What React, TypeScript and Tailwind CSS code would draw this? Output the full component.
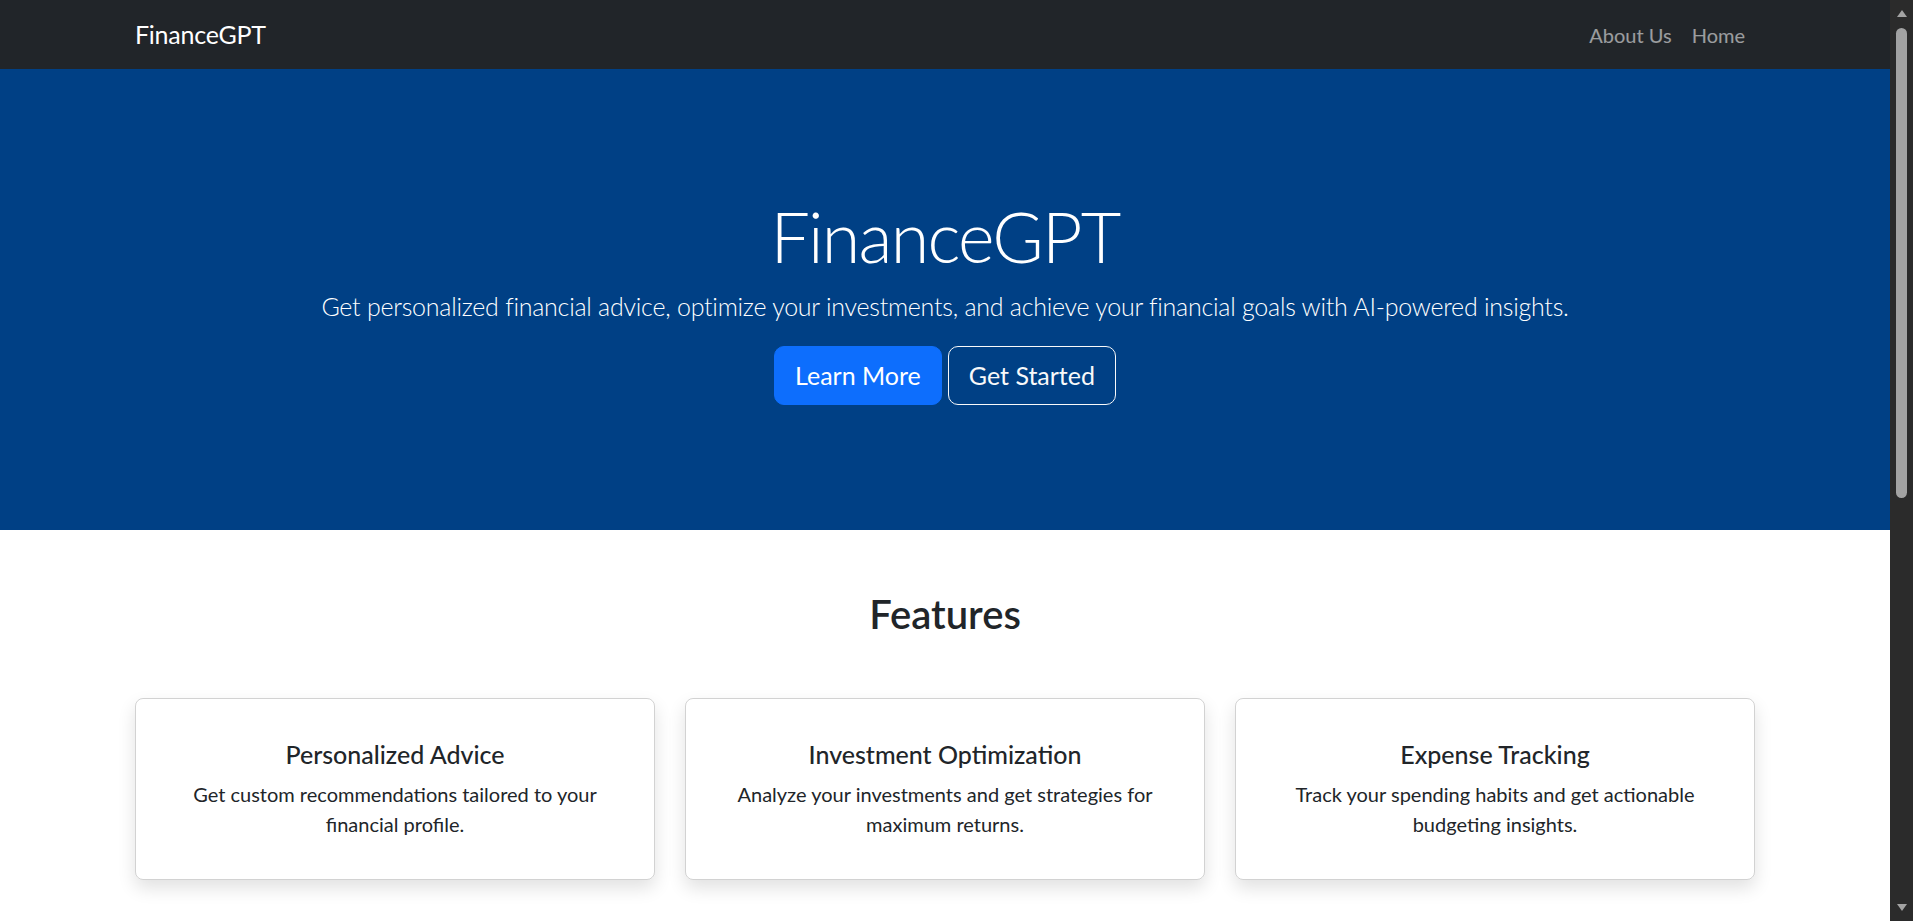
import React from "react";

const features = [
  {
    title: "Personalized Advice",
    text: "Get custom recommendations tailored to your financial profile.",
  },
  {
    title: "Investment Optimization",
    text: "Analyze your investments and get strategies for maximum returns.",
  },
  {
    title: "Expense Tracking",
    text: "Track your spending habits and get actionable budgeting insights.",
  },
];

const ScrollTrack = () => (
  <div className="w-[23px] shrink-0 bg-[#2b2b2b] flex flex-col items-center">
    <svg width="12" height="9" viewBox="0 0 12 9" className="mt-[9px]">
      <path d="M6 1 L11 8 L1 8 Z" fill="#a3a3a3" />
    </svg>
    <div className="w-[11px] h-[470px] mt-[10px] rounded-full bg-[#a3a3a3]" />
    <div className="flex-1" />
    <svg width="12" height="9" viewBox="0 0 12 9" className="mb-[9px]">
      <path d="M1 1 L11 1 L6 8 Z" fill="#a3a3a3" />
    </svg>
  </div>
);

const App = () => {
  return (
    <div className="flex h-[921px] overflow-hidden bg-white text-[#212529] font-['Lato',sans-serif]">
      <div className="flex-1 min-w-0">
        {/* navbar */}
        <nav className="bg-[#212529] h-[69px]">
          <div className="max-w-[1650px] mx-auto px-[15px] h-full flex items-center justify-between">
            <a href="#" className="text-white text-[25px] leading-none tracking-[-0.01em]">
              FinanceGPT
            </a>
            <div className="flex text-[20px] text-white/55">
              <a href="#" className="px-[10px]">
                About Us
              </a>
              <a href="#" className="px-[10px]">
                Home
              </a>
            </div>
          </div>
        </nav>

        {/* hero */}
        <header className="bg-[#004085] text-white text-center py-[125px]">
          <h1 className="text-[70px] font-light leading-[1.2] mb-[10px] tracking-[-0.025em]">
            FinanceGPT
          </h1>
          <p className="text-[25px] font-light leading-[1.5] mb-[20px] tracking-[-0.01em]">
            Get personalized financial advice, optimize your investments, and
            achieve your financial goals with AI-powered insights.
          </p>
          <div className="flex justify-center gap-[6px]">
            <a
              href="#"
              className="bg-[#0d6efd] border border-[#0d6efd] rounded-[10px] px-[20px] py-[10px] text-[25px] leading-[1.5]"
            >
              Learn More
            </a>
            <a
              href="#"
              className="border border-[#f8f9fa] text-[#f8f9fa] rounded-[10px] px-[20px] py-[10px] text-[25px] leading-[1.5]"
            >
              Get Started
            </a>
          </div>
        </header>

        {/* features */}
        <section className="py-[60px]">
          <div className="max-w-[1650px] mx-auto px-[15px]">
            <h2 className="text-center text-[40px] font-semibold leading-[1.2] mb-[60px]">
              Features
            </h2>
            <div className="grid grid-cols-3 gap-[30px]">
              {features.map((f) => (
                <div
                  key={f.title}
                  className="border border-black/[0.175] rounded-[8px] shadow-[0_8px_18px_rgba(0,0,0,0.12)] p-[40px] text-center"
                >
                  <h5 className="text-[25px] font-medium leading-[1.2] mb-[10px]">
                    {f.title}
                  </h5>
                  <p className="text-[20px] leading-[1.5]">{f.text}</p>
                </div>
              ))}
            </div>
          </div>
        </section>
      </div>
      <ScrollTrack />
    </div>
  );
};

export default App;
